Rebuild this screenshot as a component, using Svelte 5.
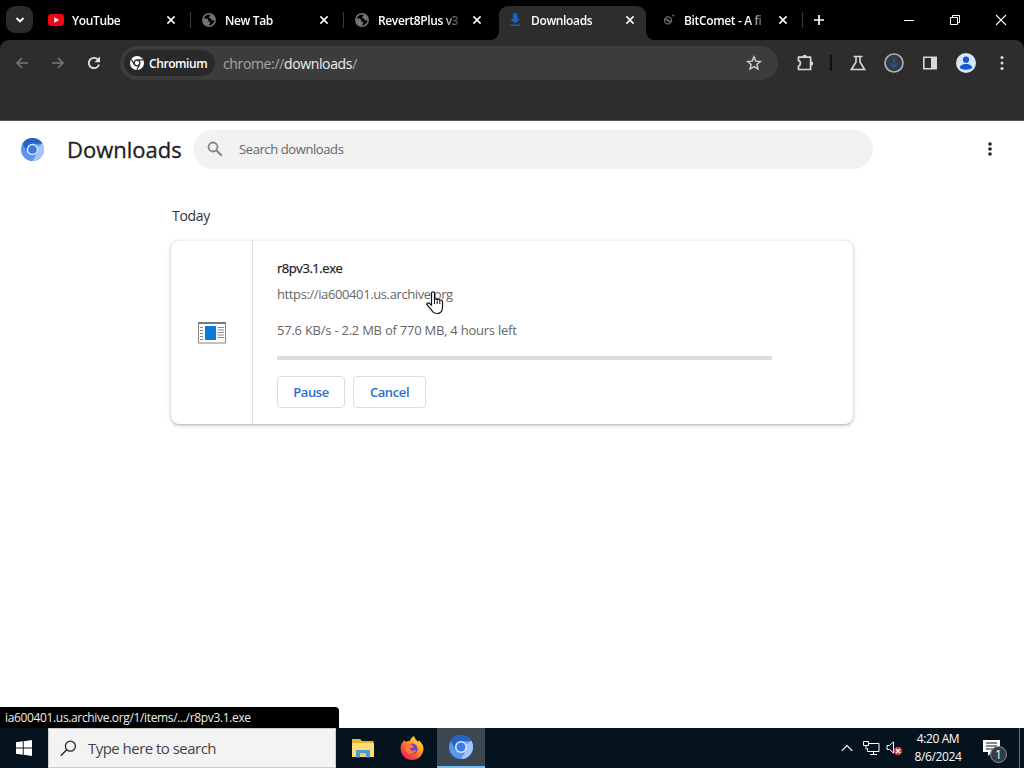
<script>
  let tabs = [
    { title: 'YouTube', icon: 'youtube', divider: true },
    { title: 'New Tab', icon: 'globe', divider: true },
    { title: 'Revert8Plus v3', icon: 'globe' },
    { title: 'Downloads', icon: 'download', active: true },
    { title: 'BitComet - A fi', icon: 'comet', divider: true }
  ];

  const download = {
    name: 'r8pv3.1.exe',
    url: 'https://ia600401.us.archive.org',
    status: '57.6 KB/s - 2.2 MB of 770 MB, 4 hours left',
    percent: 0
  };
</script>

{#snippet chromium(size)}
  <svg width={size} height={size} viewBox="0 0 24 24">
    <circle cx="12" cy="12" r="12" fill="#5a96ee" />
    <path d="M12 12 22.4 6A12 12 0 0 1 12 24l5.2-9z" fill="#a5c5fa" />
    <path d="M1.6 6A12 12 0 0 1 22.4 6H12A6 6 0 0 0 6.8 15z" fill="#2563c4" />
    <circle cx="12" cy="12" r="6" fill="#dce9ff" />
    <circle cx="12" cy="12" r="4.5" fill="#377ce8" />
  </svg>
{/snippet}

<div class="screen">
  <header class="tab-strip">
    <button class="tab-search" aria-label="Search tabs">
      <svg width="10" height="10" viewBox="0 0 10 10"><path d="M1.5 3 5 6.5 8.5 3" fill="none" stroke="#fff" stroke-width="1.8" /></svg>
    </button>
    <div class="tabs">
      {#each tabs as tab}
        <div class="tab" class:active={tab.active} class:divider={tab.divider}>
          <span class="favicon">
            {#if tab.icon === 'youtube'}
              <svg width="16" height="16" viewBox="0 0 16 16"><rect y="2" width="16" height="12" rx="3" fill="#f00814" /><path d="M6.3 5.3v5.4L11 8z" fill="#fff" /></svg>
            {:else if tab.icon === 'globe'}
              <svg width="16" height="16" viewBox="0 0 16 16"><circle cx="8" cy="8" r="6.2" fill="none" stroke="#727578" stroke-width="1.5" /><path d="M2 6.5h4l1.5 1.7-1 1.3H9v2l-1.8 2.7C4 13.5 2 11 2 8zM8.3 2l1.2 1.8-2 1.8 2.4.9 1.1 1.8h3C14 5 12 2.4 8.3 2z" fill="#727578" /></svg>
            {:else if tab.icon === 'download'}
              <svg width="16" height="16" viewBox="0 0 16 16"><path d="M6 1.5h4.5V7H13l-4.8 4.5L3.4 7H6z" fill="#1765cc" /><path d="M3.5 12.5h9.5V14H3.5z" fill="#265d9f" /></svg>
            {:else}
              <svg width="16" height="16" viewBox="0 0 16 16"><circle cx="8" cy="8.4" r="3.5" fill="none" stroke="#6b6d6f" stroke-width="1.4" /><path d="m5.8 7 4.4 3" stroke="#77797b" stroke-width="1.8" /><circle cx="13.2" cy="3.5" r="1" fill="#65686a" /></svg>
            {/if}
          </span>
          <span class="title">{tab.title}</span>
          <svg class="close" width="10" height="10" viewBox="0 0 10 10"><path d="m1.4 1.4 7.2 7.2m0-7.2L1.4 8.6" stroke="#fff" stroke-width="1.5" /></svg>
        </div>
      {/each}
    </div>
    <button class="new-tab" aria-label="New tab">
      <svg width="12" height="12" viewBox="0 0 12 12"><path d="M6 1v10M1 6h10" stroke="#fff" stroke-width="1.7" /></svg>
    </button>
    <div class="window-buttons">
      <svg width="12" height="12" viewBox="0 0 12 12"><path d="M1 6.5h10" stroke="#fff" /></svg>
      <svg width="12" height="12" viewBox="0 0 12 12"><path d="M1.5 3.5h7v7h-7zM3.5 3V1.5h7v7H9" fill="none" stroke="#fff" /></svg>
      <svg width="12" height="12" viewBox="0 0 12 12"><path d="m1 1 10 10m0-10L1 11" stroke="#fff" stroke-width="1.1" /></svg>
    </div>
  </header>

  <nav class="toolbar">
    <div class="nav-buttons">
      <svg width="16" height="16" viewBox="0 0 16 16"><path d="M14 8H3m5-5L3 8l5 5" fill="none" stroke="#77797b" stroke-width="1.5" /></svg>
      <svg width="16" height="16" viewBox="0 0 16 16"><path d="M2 8h11M8 3l5 5-5 5" fill="none" stroke="#77797b" stroke-width="1.5" /></svg>
      <svg width="16" height="16" viewBox="0 0 16 16"><path d="M13 9.5A5.2 5.2 0 1 1 11.8 4.4L13 5.8" fill="none" stroke="#e3e3e3" stroke-width="1.8" /><path d="M14 1.6v5.6H8.4z" fill="#e3e3e3" /></svg>
    </div>
    <div class="omnibox">
      <span class="chip">
        <svg width="14" height="14" viewBox="0 0 14 14"><circle cx="7" cy="7" r="7" fill="#fff" /><circle cx="7" cy="7" r="2.8" fill="none" stroke="#292929" stroke-width="1.3" /><path d="M7 3.9h6M4.3 8.5 1.3 3.3M9.7 8.5l-3 5.2" stroke="#292929" stroke-width="1.2" /></svg>
        <b>Chromium</b>
      </span>
      <span class="address">chrome://<em>downloads</em>/</span>
      <svg class="star" width="16" height="16" viewBox="0 0 16 16"><path d="m8 1.8 1.8 4.3 4.6.4-3.5 3 1.1 4.5L8 11.6 4 14l1.1-4.5-3.5-3 4.6-.4z" fill="none" stroke="#d0d0d0" stroke-width="1.4" /></svg>
    </div>
    <div class="extensions">
      <svg width="20" height="20" viewBox="0 0 20 20"><path d="M3.500 4.200H15.600V16.500H3.500V13.100C6 12.500 6 8.100 3.500 7.600z" fill="none" stroke="#d8d8d8" stroke-width="1.700" stroke-linejoin="round" /><path d="M7.500 4a2.200 2.200 0 0 1 4.400 0zM16 8.300a2.200 2.200 0 0 1 0 4.400z" fill="#d8d8d8" /></svg>
      <span class="bar"></span>
      <svg class="flask" width="18" height="18" viewBox="0 0 18 18"><path d="M4.500 2.500h9M7 3v5l-4.600 7.500h13.200L11 8V3" fill="none" stroke="#d8d8d8" stroke-width="1.600" /></svg>
      <svg width="20" height="20" viewBox="0 0 20 20"><circle cx="10" cy="10" r="9" fill="#303b49" stroke="#b6b5ac" stroke-width="1.600" /><path d="M10 5v9M6.500 10.500 10 14l3.500-3.500" fill="none" stroke="#2b5288" stroke-width="1.800" /></svg>
      <svg width="16" height="16" viewBox="0 0 16 16"><path d="M1.800 2.300h12.400v11.400H1.800z" fill="none" stroke="#d8d8d8" stroke-width="1.600" /><path d="M9 2h5.500v12H9z" fill="#d8d8d8" /></svg>
      <svg width="20" height="20" viewBox="0 0 20 20"><circle cx="10" cy="10" r="10" fill="#d8e5fb" /><circle cx="10" cy="6.700" r="3.100" fill="#1558d0" /><path d="M3.800 15c0-5.400 12.400-5.400 12.400 0-3 2.200-9.400 2.200-12.400 0z" fill="#1558d0" /></svg>
      <svg width="4" height="16" viewBox="0 0 4 16"><circle cx="2" cy="2.600" r="1.500" fill="#ddd" /><circle cx="2" cy="8" r="1.500" fill="#ddd" /><circle cx="2" cy="13.400" r="1.500" fill="#ddd" /></svg>
    </div>
  </nav>
  <div class="bookmark-bar"></div>

  <main>
    <div class="page-header">
      {@render chromium(23)}
      <h1>Downloads</h1>
      <div class="search">
        <svg width="16" height="16" viewBox="0 0 16 16"><circle cx="6" cy="6" r="4.500" fill="none" stroke="#858585" stroke-width="1.800" /><path d="m9.500 9.500 5.200 5.200" stroke="#858585" stroke-width="2" /></svg>
        <span>Search downloads</span>
      </div>
      <svg class="more" width="4" height="14" viewBox="0 0 4 14"><circle cx="2" cy="2" r="1.800" fill="#202124" /><circle cx="2" cy="7" r="1.800" fill="#202124" /><circle cx="2" cy="12" r="1.800" fill="#202124" /></svg>
    </div>

    <section class="downloads">
      <h2>Today</h2>
      <article class="card">
        <div class="file-icon">
          <svg width="28" height="22" viewBox="0 0 28 22">
            <path d="M.5.5h27v20.5H.5z" fill="#fff" stroke="#858585" />
            <path d="M0 1h28" stroke="#777" stroke-width="2" />
            <path d="M7 4h11v14H7z" fill="#087bdc" />
            <path d="M2 5.500h3m-3 3h3m-3 3h3m-3 3h3m-3 3h3M19.500 5.500H26m-6.500 2.500H26m-6.500 2.500H26m-6.500 2.500H26m-6.500 2.500H26" stroke="#8b8b8b" />
          </svg>
        </div>
        <div class="details">
          <div class="name">{download.name}</div>
          <div class="url">{download.url}</div>
          <div class="status">{download.status}</div>
          <div class="progress"><div class="value" style="width: {download.percent}%"></div></div>
          <div class="actions">
            <button class="pause">Pause</button>
            <button class="cancel">Cancel</button>
          </div>
        </div>
      </article>
    </section>
    <div class="link-status">ia600401.us.archive.org/1/items/.../r8pv3.1.exe</div>
  </main>

  <footer class="taskbar">
    <button class="start" aria-label="Start">
      <svg width="16" height="16" viewBox="0 0 16 16"><path d="M0 2.300 6.800 1.300v6.200H0zM7.700 1.200 16 0v7.500H7.700zM0 8.400h6.800v6.300L0 13.700zM7.700 8.400H16V16l-8.300-1.200z" fill="#fff" /></svg>
    </button>
    <div class="task-search">
      <svg width="17" height="17" viewBox="0 0 17 17"><circle cx="10.400" cy="6.200" r="5" fill="none" stroke="#222" stroke-width="1.300" /><path d="m6.800 9.800-6 6" stroke="#222" stroke-width="1.300" /></svg>
      <span>Type here to search</span>
    </div>
    <div class="task-app">
      <svg width="22" height="19" viewBox="0 0 22 19"><path d="M0 0h8l2 2h11.500v16H0z" fill="#e8b72f" /><path d="M0 4h22v14H0z" fill="#fbdc75" /><path d="M4 18.500V11h14v7.500h-4v-4H8v4z" fill="#4a9bd8" /><path d="M8 14.500h6V17H8z" fill="#f4cc50" /></svg>
    </div>
    <div class="task-app">
      <svg width="24" height="24" viewBox="0 0 24 24">
        <defs><linearGradient id="fox" x1="1" y1="0" x2=".2" y2="1"><stop offset="0" stop-color="#fff34f" /><stop offset=".35" stop-color="#ffb52b" /><stop offset=".7" stop-color="#ff5435" /><stop offset="1" stop-color="#ec1a61" /></linearGradient></defs>
        <path d="M3 5.800 4.400 4l1.300 2C8 4.600 9 5 9.600 5c1-2.800 3-4.200 4.600-5 .2 2.800 2.200 4 4 6l.5-1.800C22 7 24 10 23.400 14 22.500 20 18 24 12 24S.7 19.200.6 13C.5 10 1.200 7.500 3 5.800z" fill="url(#fox)" />
        <circle cx="12.200" cy="13" r="5.400" fill="#7541c9" />
        <path d="M4 8.500c3-1.200 5.500-1 7.800.2l2.200 2c-1.500 1.500-3 .5-4 2 0 2 3.200 3.100 6 1-.5 4-7 6-10 2C4.400 13.500 4 11 4 8.500z" fill="#ff7a32" />
      </svg>
    </div>
    <div class="task-app current">{@render chromium(24)}</div>
    <div class="tray">
      <svg width="12" height="8" viewBox="0 0 12 8"><path d="m.7 6.800 5.300-5.300 5.300 5.300" fill="none" stroke="#fff" stroke-width="1.200" /></svg>
      <svg class="network" width="17" height="15" viewBox="0 0 17 15"><path d="M5.500 2.500h10.500v8H4.500V7M10.500 10.500v3M7 13.500h7M.500.500h5v4h-5zM3 4.500v4" fill="none" stroke="#fff" /></svg>
      <svg class="volume" width="17" height="16" viewBox="0 0 17 16"><path d="M1 5.500h2.500L7.500 2v11L3.500 9.500H1z" fill="none" stroke="#fff" /><circle cx="12" cy="11" r="4.300" fill="#d4373f" /><path d="m10 9 4 4m0-4-4 4" stroke="#fff" stroke-width="1.300" /></svg>
      <div class="clock"><span>4:20 AM</span><span>8/6/2024</span></div>
      <div class="notifications">
        <svg width="17" height="16" viewBox="0 0 17 16"><path d="M0 0h17v12h-8l-4 4v-4H0z" fill="#fff" /><path d="M3 3h11M3 6h11M3 9h7" stroke="#071722" /></svg>
        <span class="badge">1</span>
      </div>
      <span class="show-desktop"></span>
    </div>
  </footer>

  <svg class="cursor" width="18" height="24" viewBox="0 0 18 24"><path d="M5.500 14V2.300c0-2 3-2 3 0V9c0-1.500 2.700-1.500 2.700.3 0-1.400 2.600-1.300 2.600.5 0-1.200 2.700-1.100 2.700.8v5.700c0 4-2 6.200-5.500 6.200-3 0-4.300-1.300-5.500-3.500L1.200 14c-1-1.800 1-3 2.300-1.500z" fill="#fff" stroke="#111" stroke-width="1.200" /><path d="M8.500 9v4m2.700-3.500V13m2.600-3v3" stroke="#111" /></svg>
</div>

<style>
  :global(body) {
    margin: 0;
    overflow: hidden;
  }

  .screen {
    position: relative;
    display: flex;
    flex-direction: column;
    width: 1024px;
    height: 768px;
    overflow: hidden;
    font-family: "Open Sans", "Noto Sans", sans-serif;
    font-size: 13px;
    background: #000;
  }

  .screen *,
  .screen *::before,
  .screen *::after {
    box-sizing: border-box;
  }

  svg {
    display: block;
    flex: none;
  }

  button {
    display: flex;
    align-items: center;
    justify-content: center;
    padding: 0;
    border: 0;
    background: none;
    font: inherit;
  }

  .tab-strip {
    display: flex;
    flex: none;
    height: 40px;
    color: #fff;
  }

  .tab-search {
    width: 27px;
    height: 27px;
    margin: 6px 4px 0 6px;
    border-radius: 9px;
    background: #2b2b2b;
  }

  .tabs {
    display: flex;
  }

  .tab {
    position: relative;
    display: flex;
    align-items: center;
    width: 153px;
    padding-left: 11px;
  }

  .tab.divider::after {
    content: '';
    position: absolute;
    right: -1px;
    top: 12px;
    width: 1px;
    height: 16px;
    background: #3a3a3a;
  }

  /* divider after the third tab is hidden by the active one */
  .tab:nth-child(3)::before {
    content: '';
    position: absolute;
    left: 0;
    top: 12px;
    width: 1px;
    height: 16px;
    background: #3a3a3a;
  }

  .tab.active::before {
    content: '';
    position: absolute;
    inset: 6px 3px 0;
    border-radius: 9px 9px 0 0;
    background: #2d2d2d;
  }

  .tab.active::after {
    content: '';
    position: absolute;
    inset: auto -5px 0;
    height: 8px;
    background:
      radial-gradient(circle at 0 0, transparent 7.5px, #2d2d2d 8px) left / 8px 8px no-repeat,
      radial-gradient(circle at 100% 0, transparent 7.5px, #2d2d2d 8px) right / 8px 8px no-repeat;
  }

  .favicon,
  .title,
  .close {
    position: relative;
  }

  .title {
    width: 82px;
    margin: 1px 8px 0;
    white-space: nowrap;
    font-size: 12px;
    font-weight: 600;
    line-height: 20px;
    letter-spacing: -0.36px;
    mask-image: linear-gradient(to right, #000 64px, rgba(0, 0, 0, 0.25) 80px);
  }

  .close {
    margin-left: 4px;
  }

  .new-tab {
    width: 34px;
  }

  .window-buttons {
    display: flex;
    flex: 1;
    align-items: center;
    justify-content: flex-end;
    gap: 34px;
    padding-right: 17px;
  }

  .toolbar {
    display: flex;
    flex: none;
    align-items: center;
    height: 46px;
    padding-right: 20px;
    border-radius: 9px 9px 0 0;
    background: #2d2d2d;
  }

  .nav-buttons {
    display: flex;
    gap: 20px;
    padding: 0 18px 0 14px;
  }

  .omnibox {
    display: flex;
    align-items: center;
    width: 658px;
    height: 34px;
    padding: 0 16px 0 4px;
    border-radius: 17px;
    background: #3c3c3c;
  }

  .chip {
    display: flex;
    align-items: center;
    gap: 5px;
    width: 91px;
    height: 26px;
    padding-left: 6px;
    border-radius: 13px;
    background: #292929;
    color: #fff;
  }

  .chip b {
    font-size: 12px;
    font-weight: 600;
    letter-spacing: -0.42px;
  }

  .address {
    flex: 1;
    padding-left: 8px;
    color: #a7a7a7;
    font-size: 14px;
    letter-spacing: -0.36px;
  }

  .address em {
    font-style: normal;
    color: #eee;
  }

  .extensions {
    display: flex;
    flex: 1;
    align-items: center;
    padding-left: 17px;
  }

  .bar {
    width: 2px;
    height: 16px;
    margin: 0 17px 0 15px;
    background: #111;
  }

  .flask {
    margin-right: 17px;
  }

  .flask + svg {
    margin-right: 18px;
  }

  .flask + svg + svg {
    margin-right: 18px;
  }

  .flask + svg + svg + svg {
    margin-right: 24px;
  }

  .bookmark-bar {
    flex: none;
    height: 35px;
    background: #2d2d2d;
    border-bottom: 1px solid #555;
  }

  main {
    position: relative;
    flex: 1;
    background: #fff;
  }

  .page-header {
    display: flex;
    align-items: center;
    height: 56px;
    padding: 0 32px 0 21px;
  }

  h1 {
    width: 126px;
    margin: 0 0 0 23px;
    color: #202124;
    font-size: 22px;
    font-weight: 500;
    letter-spacing: 0;
    white-space: nowrap;
    -webkit-text-stroke: 0.3px #202124;
  }

  .search {
    display: flex;
    align-items: center;
    gap: 16px;
    width: 680px;
    height: 39px;
    padding-left: 14px;
    border-radius: 20px;
    background: #f2f2f2;
    color: #666;
    letter-spacing: -0.4px;
  }

  .more {
    margin-left: auto;
  }

  .downloads {
    width: 682px;
    margin: 28px auto 0;
  }

  h2 {
    margin: 0;
    padding-left: 1px;
    color: #333;
    font-size: 14px;
    font-weight: 400;
    line-height: 22px;
    letter-spacing: -0.3px;
  }

  .card {
    display: flex;
    height: 183px;
    margin-top: 14px;
    border-radius: 8px;
    background: #fff;
    box-shadow: 0 1px 2px rgba(60, 64, 67, 0.3), 0 1px 4px 1px rgba(60, 64, 67, 0.15);
  }

  .file-icon {
    display: flex;
    align-items: center;
    justify-content: center;
    width: 82px;
    border-right: 1px solid #ddd;
  }

  .details {
    padding: 17px 0 0 24px;
    color: #666;
    line-height: 20px;
    white-space: nowrap;
  }

  .name {
    color: #222;
    letter-spacing: -0.45px;
    -webkit-text-stroke: 0.25px #222;
  }

  .url {
    margin-top: 6px;
    letter-spacing: -0.39px;
  }

  .status {
    margin-top: 16px;
    letter-spacing: -0.24px;
  }

  .progress {
    width: 495px;
    height: 4px;
    margin-top: 16px;
    background: #ddd;
  }

  .value {
    height: 100%;
    background: #1a73e8;
  }

  .actions {
    display: flex;
    gap: 8px;
    margin-top: 16px;
  }

  .actions button {
    height: 32px;
    border: 1px solid #dadce0;
    border-radius: 4px;
    color: #2a6fcf;
    font-weight: 600;
    letter-spacing: -0.4px;
  }

  .pause {
    width: 68px;
  }

  .cancel {
    width: 73px;
  }

  .link-status {
    position: absolute;
    bottom: 0;
    left: 0;
    width: 339px;
    height: 21px;
    padding-left: 5px;
    border-top-right-radius: 4px;
    background: #000;
    color: #eee;
    font-size: 12px;
    line-height: 21px;
    letter-spacing: -0.35px;
  }

  .taskbar {
    display: flex;
    flex: none;
    height: 40px;
    background: #04131e;
    color: #fff;
  }

  .start {
    width: 48px;
  }

  .task-search {
    display: flex;
    align-items: center;
    gap: 11px;
    width: 288px;
    margin-right: 2px;
    padding-left: 11px;
    border: 1px solid #c8cdd1;
    background: #f3f3f3;
    color: #444;
    font-size: 15px;
    letter-spacing: -0.53px;
  }

  .task-app {
    display: flex;
    align-items: center;
    justify-content: center;
    width: 49px;
  }

  .task-app.current {
    width: 48px;
    margin-left: 1px;
    border-bottom: 2px solid #76b9ed;
    background: #3b4851;
  }

  .tray {
    display: flex;
    flex: 1;
    align-items: center;
    justify-content: flex-end;
  }

  .network {
    margin-left: 10px;
  }

  .volume {
    margin-left: 6px;
  }

  .clock {
    display: flex;
    flex-direction: column;
    align-items: center;
    width: 48px;
    margin: 0 21px 0 11px;
    font-size: 12px;
    line-height: 18px;
    letter-spacing: -0.4px;
    white-space: nowrap;
  }

  .notifications {
    position: relative;
    width: 36px;
  }

  .badge {
    position: absolute;
    top: 6px;
    left: 7px;
    width: 17px;
    height: 17px;
    border: 1px solid #8a9299;
    border-radius: 50%;
    background: #343d44;
    font-size: 12px;
    line-height: 15px;
    text-align: center;
  }

  .show-desktop {
    width: 5px;
    height: 40px;
    border-left: 1px solid #68727a;
  }

  .cursor {
    position: absolute;
    top: 291px;
    left: 426px;
  }
</style>
